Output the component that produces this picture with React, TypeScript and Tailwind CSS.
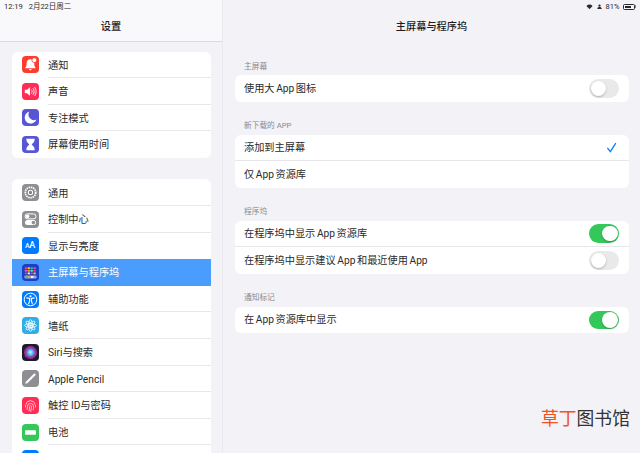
import React from "react";

const W = "#ffffff";

const Bell = () => (
  <svg viewBox="0 0 17 17" className="w-full h-full">
    <path d="M8.2 3.2c-2.4 0-3.6 1.8-3.6 4v2.2L3.4 11.4v.8h10v-.8L12.3 9.4V7.2c0-2.2-1.6-4-4.1-4z" fill={W} />
    <path d="M7 13h2.800c-.2.9-.7 1.300-1.400 1.300S7.200 13.900 7 13z" fill={W} />
    <circle cx="12.300" cy="4.200" r="2.400" fill={W} stroke="#ff3b30" strokeWidth="0.800" />
  </svg>
);
const Sound = () => (
  <svg viewBox="0 0 17 17" className="w-full h-full">
    <path d="M2.800 6.700h2.200l3-2.500v8.600l-3-2.500H2.800z" fill={W} />
    <path d="M9.600 6.800c.7 1 .7 2.400 0 3.400M11.200 5.500c1.300 1.800 1.300 4.200 0 6M12.800 4.300c1.800 2.600 1.800 5.800 0 8.400" stroke={W} strokeWidth="0.900" fill="none" strokeLinecap="round" />
  </svg>
);
const Moon = () => (
  <svg viewBox="0 0 17 17" className="w-full h-full">
    <path d="M7.200 2.800a6 6 0 1 0 7.200 7.800A5.600 5.600 0 0 1 7.200 2.800z" fill={W} />
  </svg>
);
const Hourglass = () => (
  <svg viewBox="0 0 17 17" className="w-full h-full">
    <path d="M4.400 2.800h8.200v1.300c0 2-1.800 3.100-2.900 4.400 1.100 1.300 2.900 2.400 2.900 4.400v1.300H4.400v-1.300c0-2 1.800-3.100 2.900-4.400C6.200 7.200 4.400 6.100 4.400 4.100z" fill={W} />
  </svg>
);
const Gear = () => (
  <svg viewBox="0 0 17 17" className="w-full h-full">
    <circle cx="8.500" cy="8.500" r="5.200" fill="none" stroke={W} strokeWidth="1.800" strokeDasharray="1.500 0.700" />
    <circle cx="8.500" cy="8.500" r="3.700" fill="#7f7f84" />
    <circle cx="8.500" cy="8.500" r="2.200" fill="none" stroke={W} strokeWidth="1.100" />
  </svg>
);
const Toggles = () => (
  <svg viewBox="0 0 17 17" className="w-full h-full">
    <rect x="3" y="2.900" width="11" height="5" rx="2.500" fill="none" stroke={W} strokeWidth="1" />
    <circle cx="5.600" cy="5.400" r="1.800" fill={W} />
    <rect x="3" y="9.100" width="11" height="5" rx="2.500" fill={W} />
    <circle cx="11.400" cy="11.600" r="1.800" fill="#8e8e93" />
  </svg>
);
const HomeGrid = () => {
  const cols = ["#ff453a", "#ffd60a", "#30d158", "#bf5af2", "#ff9f0a", "#64d2ff", "#ff375f", "#ffffff"];
  return (
    <svg viewBox="0 0 17 17" className="w-full h-full">
      {[3.200, 5.800, 8.400].map((y, r) =>
        [2.800, 5.700, 8.600, 11.500].map((x, c) => (
          <rect key={`${r}-${c}`} x={x} y={y} width="2.200" height="1.900" rx="0.400" fill={cols[(r * 3 + c) % cols.length]} />
        ))
      )}
      <rect x="2.400" y="11.600" width="12.200" height="2.800" rx="0.800" fill="#8fa8f8" />
      <rect x="3.200" y="12.100" width="2.400" height="1.800" fill="#30d158" />
      <rect x="6.100" y="12.100" width="2.400" height="1.800" fill="#ff9f0a" />
      <rect x="9" y="12.100" width="2.400" height="1.800" fill="#ffffff" />
    </svg>
  );
};
const Access = () => (
  <svg viewBox="0 0 17 17" className="w-full h-full">
    <circle cx="8.500" cy="8.500" r="6.300" fill="none" stroke={W} strokeWidth="1" />
    <circle cx="8.500" cy="5.300" r="1.100" fill={W} />
    <path d="M4.800 6.900l2.800.6v2.300l-1 3M12.200 6.900l-2.800.6v2.300l1 3" stroke={W} strokeWidth="1.100" fill="none" strokeLinecap="round" />
  </svg>
);
const Flower = () => (
  <svg viewBox="0 0 17 17" className="w-full h-full">
    {[0, 45, 90, 135].map((a) => (
      <ellipse key={a} cx="8.500" cy="8.500" rx="2" ry="5.800" fill="none" stroke={W} strokeWidth="0.800" transform={`rotate(${a} 8.500 8.500)`} />
    ))}
    <circle cx="8.500" cy="8.500" r="1.300" fill={W} />
  </svg>
);
const Siri = () => (
  <svg viewBox="0 0 17 17" className="w-full h-full">
    <defs>
      <radialGradient id="sg" cx="50%" cy="50%" r="50%">
        <stop offset="0%" stopColor="#ffffff" />
        <stop offset="35%" stopColor="#5ac8fa" />
        <stop offset="70%" stopColor="#7a3fd0" />
        <stop offset="100%" stopColor="#e0245e" stopOpacity="0.800" />
      </radialGradient>
    </defs>
    <circle cx="8.500" cy="8.500" r="6.500" fill="url(#sg)" />
    <path d="M3 13c2-4 5-5 11-3" stroke="#34c759" strokeWidth="1" fill="none" opacity="0.500" />
  </svg>
);
const Pencil = () => (
  <svg viewBox="0 0 17 17" className="w-full h-full">
    <path d="M12.400 3.200l1.500 1.500-8.300 8.400-2.400.9.900-2.400z" fill={W} />
  </svg>
);
const Finger = () => (
  <svg viewBox="0 0 17 17" className="w-full h-full" fill="none" stroke={W} strokeWidth="0.700" strokeLinecap="round">
    <path d="M3.800 7.200a4.900 4.900 0 0 1 9.400 0" />
    <path d="M3.400 10a6 6 0 0 1 .300-1.500M13.600 10c0-.6 0-1-.100-1.500" />
    <path d="M5 12.500c.3-1 .4-2 .4-3a3.100 3.100 0 0 1 6.200 0c0 1.200-.1 2.300-.4 3.400" />
    <path d="M7 13.900c.4-1.400.6-2.900.6-4.400a.9.900 0 0 1 1.800 0c0 1.700-.2 3.300-.6 4.900" />
  </svg>
);
const Battery = () => (
  <svg viewBox="0 0 17 17" className="w-full h-full">
    <rect x="3" y="6.200" width="11" height="4.600" rx="0.800" fill={W} />
  </svg>
);

type Item = { label: string; bg: string; icon?: React.ReactNode; selected?: boolean };

const top: Item[] = [
  { label: "通知", bg: "bg-[#ff3b30]", icon: <Bell /> },
  { label: "声音", bg: "bg-[#ff2d55]", icon: <Sound /> },
  { label: "专注模式", bg: "bg-[#5856d6]", icon: <Moon /> },
  { label: "屏幕使用时间", bg: "bg-[#5856d6]", icon: <Hourglass /> },
];
const rest: Item[] = [
  { label: "通用", bg: "bg-[#8e8e93]", icon: <Gear /> },
  { label: "控制中心", bg: "bg-[#8e8e93]", icon: <Toggles /> },
  { label: "显示与亮度", bg: "bg-[#007aff]", icon: <span className="text-white text-[9px] leading-none font-medium tracking-[-0.2px]"><span className="text-[7px]">A</span>A</span> },
  { label: "主屏幕与程序坞", bg: "bg-[#1c3fc4]", icon: <HomeGrid />, selected: true },
  { label: "辅助功能", bg: "bg-[#007aff]", icon: <Access /> },
  { label: "墙纸", bg: "bg-[#32ade6]", icon: <Flower /> },
  { label: "Siri与搜索", bg: "bg-[#1c1c2e]", icon: <Siri /> },
  { label: "Apple Pencil", bg: "bg-[#8e8e93]", icon: <Pencil /> },
  { label: "触控 ID与密码", bg: "bg-[#ff2d55]", icon: <Finger /> },
  { label: "电池", bg: "bg-[#34c759]", icon: <Battery /> },
  { label: "", bg: "bg-[#007aff]" },
];

function SideRow({ item, last }: { item: Item; last: boolean }) {
  return (
    <div className={`h-[26.6px] shrink-0 flex items-center pl-[9.500px] relative ${item.selected ? "bg-[#4a9dfd]" : ""}`}>
      <div className={`w-[17px] h-[17px] rounded-[4px] flex items-center justify-center overflow-hidden shrink-0 ${item.bg}`}>{item.icon}</div>
      <span className={`ml-[9.500px] text-[10.2px] leading-none pt-[2px] ${item.selected ? "text-white" : "text-[#2a2a2c]"}`}>{item.label}</span>
      {!last && !item.selected && <div className="absolute left-[36px] right-0 bottom-0 h-px bg-[#e8e8ec]" />}
    </div>
  );
}

function Toggle({ on }: { on: boolean }) {
  return (
    <div className={`w-[30px] h-[18.500px] rounded-full p-[1.500px] flex ${on ? "bg-[#34c759] justify-end" : "bg-[#e9e9ea] justify-start"}`}>
      <div className="w-[15.500px] h-[15.500px] rounded-full bg-white shadow-[0_1px_2px_rgba(0,0,0,0.25)]" />
    </div>
  );
}

function Row({ label, right, last }: { label: React.ReactNode; right?: React.ReactNode; last?: boolean }) {
  return (
    <div className={`h-[26.500px] flex items-center justify-between pl-[9px] pr-[10px] ${last ? "" : "border-b border-[#e6e6ea]"}`}>
      <span className="text-[10.2px] leading-none pt-[1.500px] text-[#2a2a2c]">{label}</span>
      {right}
    </div>
  );
}

const App2 = () => <span className="mx-[1.600px]">App</span>;

function Section({ title, children }: { title: string; children: React.ReactNode }) {
  return (
    <div>
      <div className="h-[33px] flex items-end pb-[3.500px] pl-[9px] text-[7.7px] leading-[10px] text-[#8a8a8e]">{title}</div>
      <div className="bg-white rounded-[6px] overflow-hidden">{children}</div>
    </div>
  );
}

export default function App() {
  return (
    <div
      className="w-[640px] h-[453px] overflow-hidden flex relative bg-[#f2f2f7]"
      style={{ fontFamily: 'Roboto, "Noto Sans CJK SC", sans-serif' }}
    >
      <aside className="w-[222px] shrink-0 h-full flex flex-col overflow-hidden">
        <div className="h-[41.500px] shrink-0 bg-[#f9f9fb] border-b border-[#dcdce0] flex flex-col">
          <div className="h-[12px] pl-[4px] pt-[1px] flex items-center gap-[6px] text-[7.5px] leading-none text-[#2a2a2c]">
            <span>12:19</span>
            <span>2月22日周二</span>
          </div>
          <div className="flex-1 flex items-center justify-center pt-[1px] text-[10.2px] font-medium text-[#1c1c1e]">设置</div>
        </div>
        <div className="pt-[10px] pl-[12px] pr-[11px] flex flex-col gap-[21.500px]">
          <div className="bg-white rounded-[6px] overflow-hidden">
            {top.map((it, i) => (
              <SideRow key={it.label} item={it} last={i === top.length - 1} />
            ))}
          </div>
          <div className="bg-white rounded-t-[6px] overflow-hidden">
            {rest.map((it, i) => (
              <SideRow key={i} item={it} last={i === 2 || i === rest.length - 1} />
            ))}
          </div>
        </div>
      </aside>

      <main className="flex-1 h-full border-l border-[#e9e9ee] flex flex-col">
        <div className="h-[41px] shrink-0 flex flex-col">
          <div className="h-[12px] pr-[4px] pt-[1px] flex items-center justify-end gap-[3px] text-[7.5px] leading-none text-[#2a2a2c]">
            <svg viewBox="0 0 10 8" className="w-[7px] h-[5.500px]">
              <path d="M5 7.500L0.500 2.800a6.500 6.500 0 0 1 9 0z" fill="#2a2a2c" />
            </svg>
            <svg viewBox="0 0 8 8" className="w-[5px] h-[5.500px] ml-[1px]">
              <circle cx="4" cy="2.200" r="1.800" fill="#2a2a2c" />
              <path d="M0.500 7.500h7C7.500 5.500 6 4.500 4 4.500S.5 5.500.5 7.500z" fill="#2a2a2c" />
            </svg>
            <span className="ml-[1px]">81%</span>
            <div className="flex items-center">
              <div className="w-[12px] h-[6px] border border-[#2a2a2c] rounded-[1.500px] p-px flex">
                <div className="w-[80%] bg-[#2a2a2c]" />
              </div>
              <div className="w-[1px] h-[2.500px] ml-[0.500px] bg-[#8a8a8e]" />
            </div>
          </div>
          <div className="flex-1 flex items-center justify-center pt-[1px] text-[10.2px] font-medium text-[#1c1c1e]">主屏幕与程序坞</div>
        </div>
        <div className="pt-px pl-[12px] pr-[11px] flex flex-col">
          <Section title="主屏幕">
            <Row label={<>使用大<App2 />图标</>} last right={<Toggle on={false} />} />
          </Section>
          <Section title="新下载的 APP">
            <Row
              label="添加到主屏幕"
              right={
                <svg viewBox="0 0 12 12" className="w-[11px] h-[11px] mr-[2px]">
                  <path d="M1.500 6.500L4.700 10.500L10.700 1.200" fill="none" stroke="#007aff" strokeWidth="1.300" />
                </svg>
              }
            />
            <Row label={<>仅<App2 />资源库</>} last />
          </Section>
          <Section title="程序坞">
            <Row label={<>在程序坞中显示<App2 />资源库</>} right={<Toggle on />} />
            <Row label={<>在程序坞中显示建议<App2 />和最近使用<App2 /></>} last right={<Toggle on={false} />} />
          </Section>
          <Section title="通知标记">
            <Row label={<>在<App2 />资源库中显示</>} last right={<Toggle on />} />
          </Section>
        </div>
      </main>

      <div className="absolute left-[541px] top-[409px] text-[17.800px] leading-[20px] whitespace-nowrap">
        <span className="text-[#f4511e]">草丁</span>
        <span className="text-[#333333]">图书馆</span>
      </div>
    </div>
  );
}
